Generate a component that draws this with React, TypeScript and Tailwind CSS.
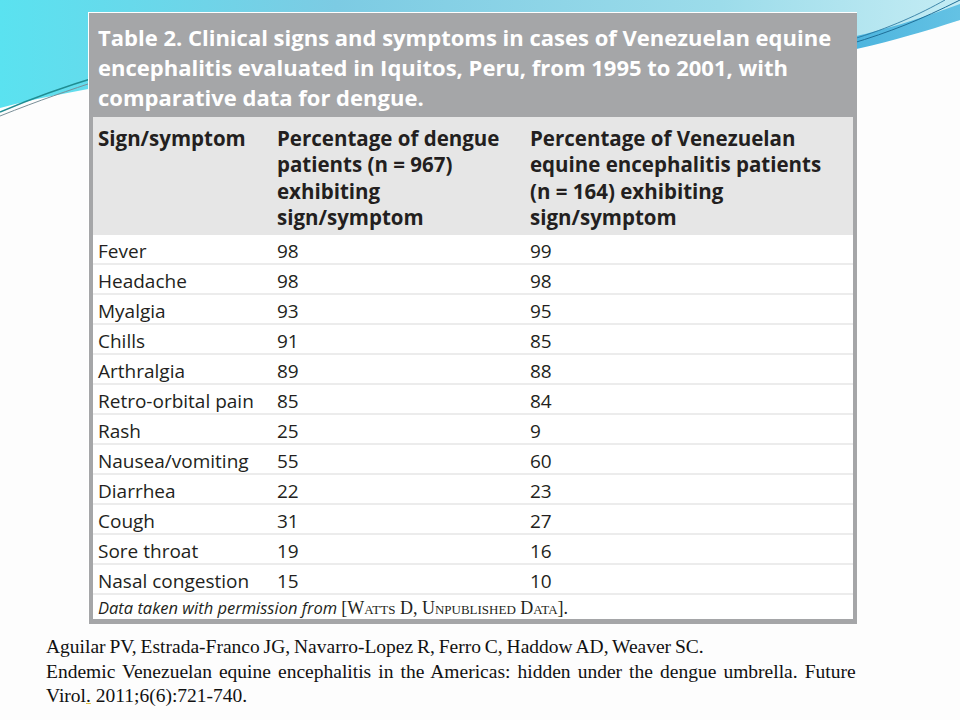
import React from "react";

const rows: [string, string, string][] = [
  ["Fever", "98", "99"],
  ["Headache", "98", "98"],
  ["Myalgia", "93", "95"],
  ["Chills", "91", "85"],
  ["Arthralgia", "89", "88"],
  ["Retro-orbital pain", "85", "84"],
  ["Rash", "25", "9"],
  ["Nausea/vomiting", "55", "60"],
  ["Diarrhea", "22", "23"],
  ["Cough", "31", "27"],
  ["Sore throat", "19", "16"],
  ["Nasal congestion", "15", "10"],
];

function Wave() {
  return (
    <svg
      className="absolute left-0 top-0"
      width="960"
      height="130"
      viewBox="0 0 960 130"
    >
      <defs>
        <linearGradient id="sky" x1="0" y1="0" x2="1" y2="0">
          <stop offset="0" stopColor="#5ae2f0" />
          <stop offset="0.35" stopColor="#7ccbe3" />
          <stop offset="0.75" stopColor="#9cdcea" />
          <stop offset="1" stopColor="#c4ecf4" />
        </linearGradient>
        <linearGradient id="band" x1="0" y1="0" x2="1" y2="0">
          <stop offset="0" stopColor="#34a6d8" />
          <stop offset="1" stopColor="#64c2e4" />
        </linearGradient>
      </defs>
      <path d="M0,0 H960 V20 C760,72 300,30 0,108 Z" fill="url(#sky)" />
      <path
        d="M960,20 C880,46 820,60 740,66 L740,54 C830,46 890,30 960,4 Z"
        fill="url(#band)"
      />
      <path d="M0,112 C40,95 70,85 100,76" stroke="#1f8c92" strokeWidth="1.5" fill="none" />
      <path d="M0,116 C40,100 70,90 100,80" stroke="#7a8f98" strokeWidth="1" fill="none" />
      <path d="M850,44 C890,32 920,20 960,0" stroke="#1f6f98" strokeWidth="1" fill="none" />
      <path d="M850,40 C890,28 920,14 945,0" stroke="#1f6f98" strokeWidth="0.8" fill="none" />
    </svg>
  );
}

export default function App() {
  const sans = { fontFamily: '"Open Sans", "Noto Sans", sans-serif' };
  return (
    <div className="relative w-[960px] h-[720px] overflow-hidden bg-[#fdfdfd]">
      <Wave />
      <div className="relative pt-[12px] pl-[88px]">
        <div
          className="w-[769px] bg-[#a5a6a8] border-t border-l border-white pl-[4px] pr-[4px] pb-[5px]"
          style={sans}
        >
          <div className="pl-[5px] pt-[9px] pb-[5px] text-white font-bold text-[22px] leading-[30px] whitespace-nowrap">
            Table 2. Clinical signs and symptoms in cases of Venezuelan equine
            <br />
            encephalitis evaluated in Iquitos, Peru, from 1995 to 2001, with
            <br />
            comparative data for dengue.
          </div>
          <div className="bg-white text-[#231f20]">
            <div className="grid grid-cols-[179px_253px_1fr] bg-[#e6e6e6] font-bold text-[20.5px] leading-[26.3px] pt-[8px] pb-[5px] whitespace-nowrap">
              <div className="px-[5px]">Sign/symptom</div>
              <div className="px-[5px]">
                Percentage of dengue
                <br />
                patients (n = 967)
                <br />
                exhibiting
                <br />
                sign/symptom
              </div>
              <div className="px-[5px]">
                Percentage of Venezuelan
                <br />
                equine encephalitis patients
                <br />
                (n = 164) exhibiting
                <br />
                sign/symptom
              </div>
            </div>
            {rows.map(([a, b, c]) => (
              <div
                key={a}
                className="grid grid-cols-[179px_253px_1fr] h-[30px] items-center border-b-2 border-[#ececec] text-[19px] pt-[2px]"
              >
                <div className="px-[5px] whitespace-nowrap">{a}</div>
                <div className="px-[5px]">{b}</div>
                <div className="px-[5px]">{c}</div>
              </div>
            ))}
            <div className="h-[24px] flex items-center px-[5px] pt-[3px] text-[16.5px] italic whitespace-nowrap">
              Data taken with permission from&nbsp;
              <span
                className="not-italic text-[18px]"
                style={{ fontFamily: '"Liberation Serif", serif', fontVariant: "small-caps" }}
              >
                [Watts D, Unpublished Data].
              </span>
            </div>
          </div>
        </div>
      </div>
      <div
        className="pl-[46px] pt-[11px] text-[19.5px] leading-[24.5px] text-[#111] whitespace-nowrap"
        style={{ fontFamily: '"Liberation Serif", "DejaVu Serif", serif' }}
      >
        <span className="[word-spacing:-1px]">
          Aguilar PV, Estrada-Franco JG, Navarro-Lopez R, Ferro C, Haddow AD, Weaver SC.
        </span>
        <br />
        <span className="[word-spacing:2.2px]">
          Endemic Venezuelan equine encephalitis in the Americas: hidden under the dengue umbrella. Future
        </span>
        <br />
        Virol<span className="underline decoration-[#e0c040]">.</span> 2011;6(6):721-740.
      </div>
    </div>
  );
}
